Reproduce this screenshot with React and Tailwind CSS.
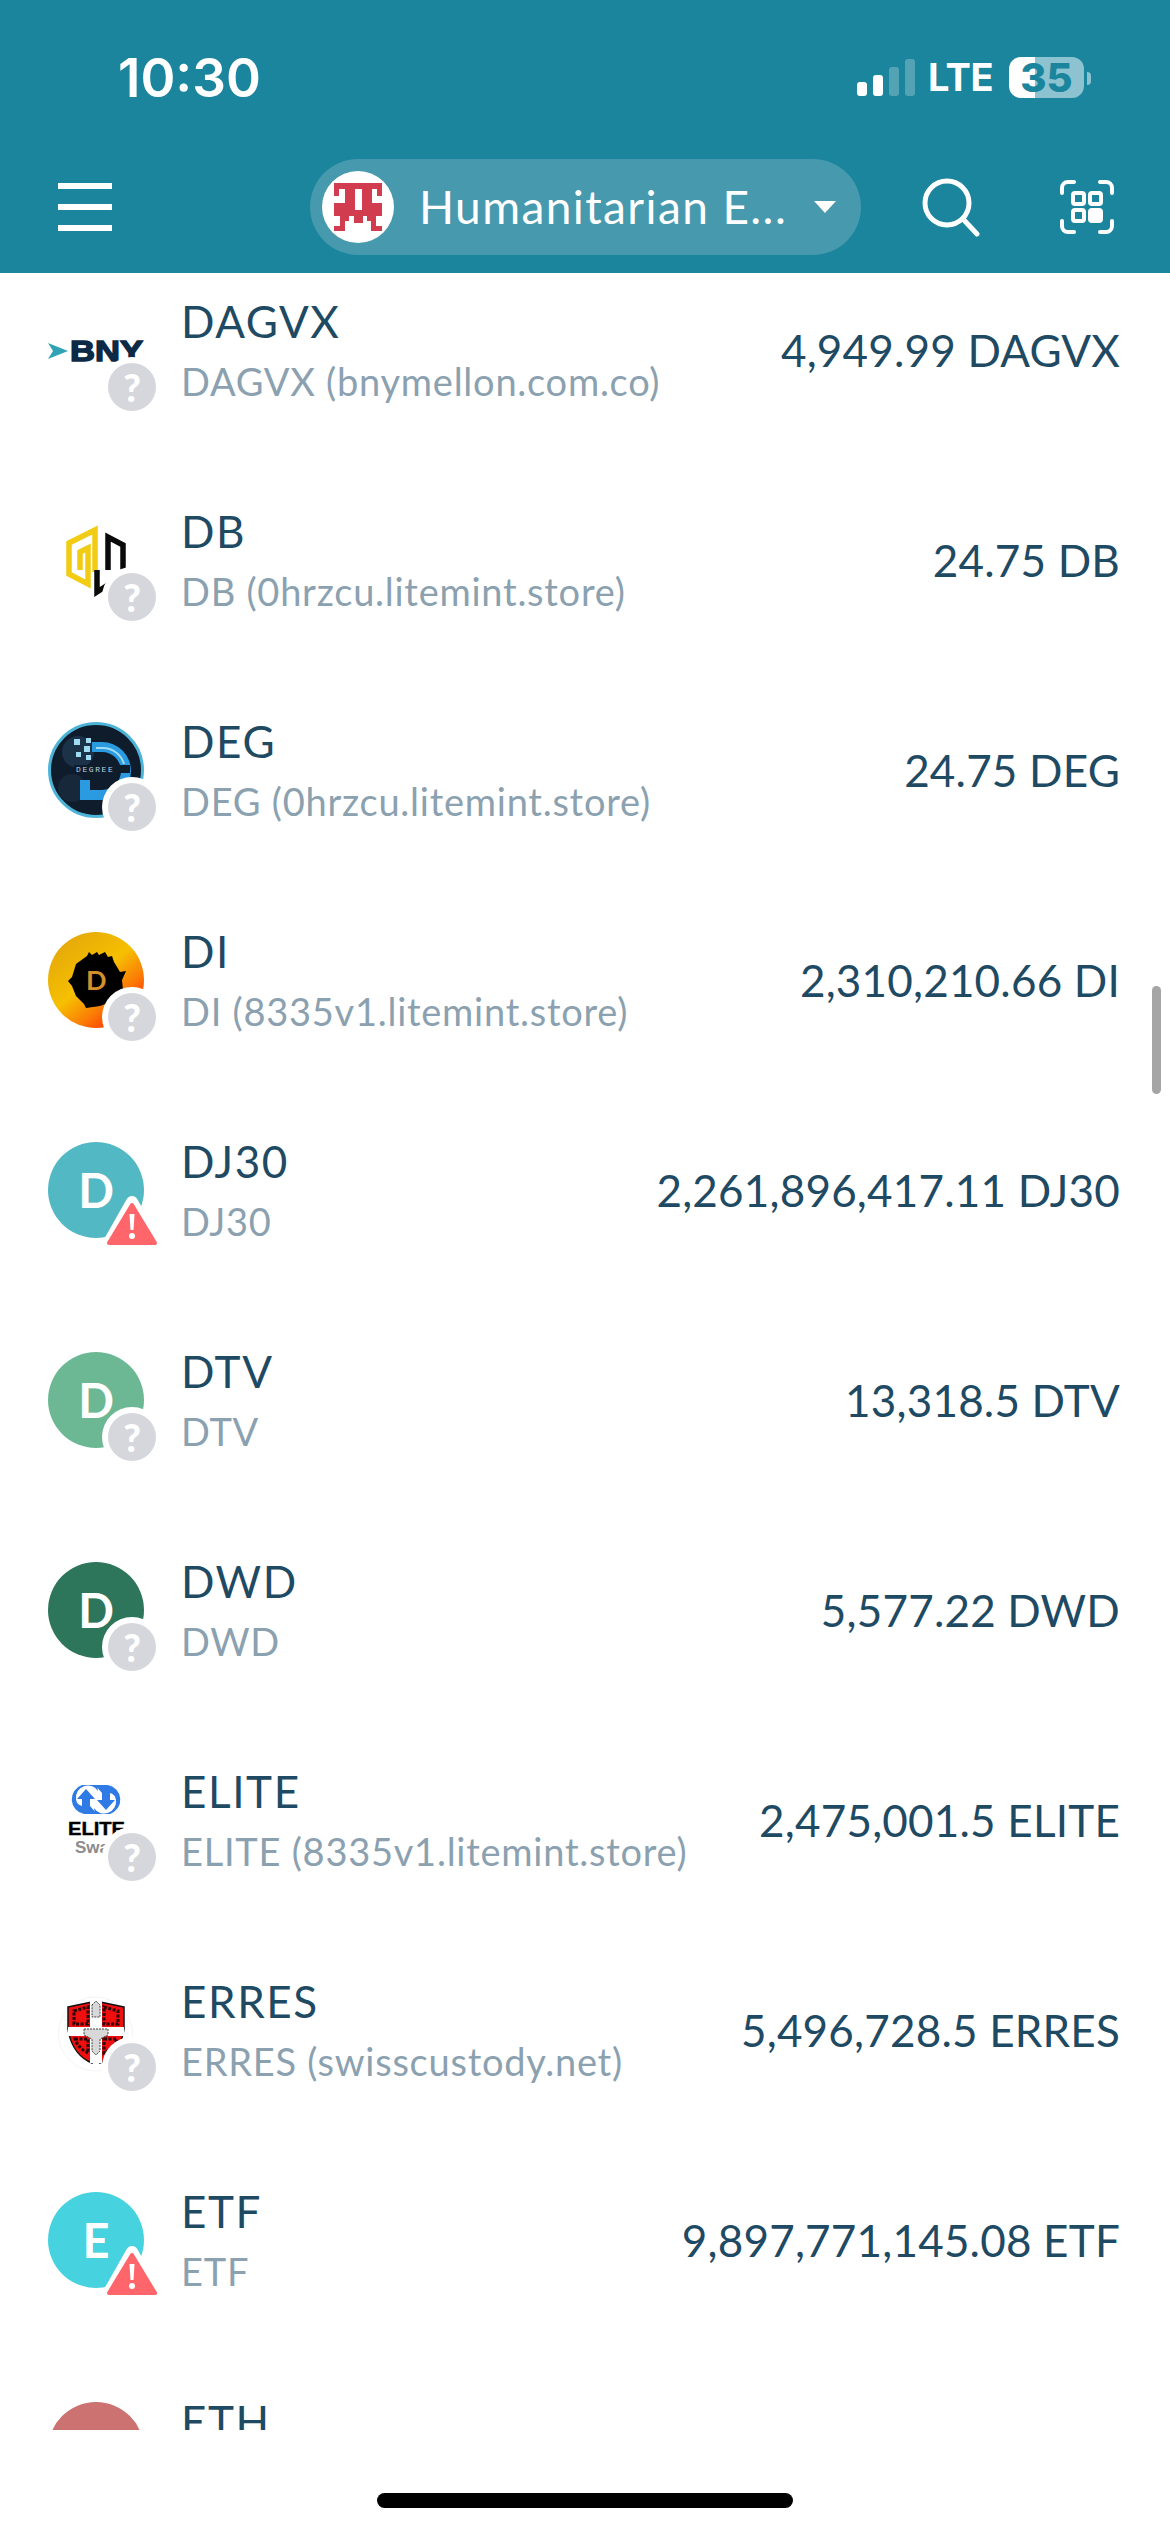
import React from 'react'

const font = { fontFamily: 'Lato, sans-serif' }

const rows = [
  { name: 'DAGVX', sub: 'DAGVX (bnymellon.com.co)', amount: '4,949.99 DAGVX', logo: 'bny' },
  { name: 'DB', sub: 'DB (0hrzcu.litemint.store)', amount: '24.75 DB', logo: 'db' },
  { name: 'DEG', sub: 'DEG (0hrzcu.litemint.store)', amount: '24.75 DEG', logo: 'deg' },
  { name: 'DI', sub: 'DI (8335v1.litemint.store)', amount: '2,310,210.66 DI', logo: 'di' },
  { name: 'DJ30', sub: 'DJ30', amount: '2,261,896,417.11 DJ30', letter: 'D', bg: 'bg-[#52b8c4]', warn: true },
  { name: 'DTV', sub: 'DTV', amount: '13,318.5 DTV', letter: 'D', bg: 'bg-[#6db894]' },
  { name: 'DWD', sub: 'DWD', amount: '5,577.22 DWD', letter: 'D', bg: 'bg-[#2d765b]' },
  { name: 'ELITE', sub: 'ELITE (8335v1.litemint.store)', amount: '2,475,001.5 ELITE', logo: 'elite' },
  { name: 'ERRES', sub: 'ERRES (swisscustody.net)', amount: '5,496,728.5 ERRES', logo: 'erres' },
  { name: 'ETF', sub: 'ETF', amount: '9,897,771,145.08 ETF', letter: 'E', bg: 'bg-[#47d2df]', warn: true },
  { name: 'ETH', sub: 'ETH', amount: '', letter: 'E', bg: 'bg-[#cc7372]' },
]

function Logo({ kind }) {
  if (kind === 'bny') {
    return (
      <svg viewBox="0 0 96 96" className="w-24 h-24 overflow-visible">
        <path d="M0 41 L20 49 L0 57 L5 49 Z" fill="#2fa3b5" />
        <text x="22" y="59" fontFamily="Liberation Sans" fontWeight="700" fontSize="29" textLength="73" lengthAdjust="spacingAndGlyphs" fill="#0c2a45" stroke="#0c2a45" strokeWidth="1.4">BNY</text>
      </svg>
    )
  }
  if (kind === 'db') {
    return (
      <svg viewBox="0 0 96 96" className="w-24 h-24 overflow-visible">
        <path d="M47 60 V18 L21 31 V62 L40 72 V36 L32 40 V58" fill="none" stroke="#f2cc12" strokeWidth="5.5" />
        <path d="M49 58 V80 L63 71 M60 58 V25 L75 33 V62" fill="none" stroke="#0a0a0a" strokeWidth="5.5" />
      </svg>
    )
  }
  if (kind === 'deg') {
    return (
      <svg viewBox="0 0 96 96" className="w-24 h-24 overflow-visible">
        <circle cx="48" cy="48" r="46.5" fill="#0f1c2b" stroke="#4db4d8" strokeWidth="3" />
        <circle cx="30" cy="30" r="16" fill="#1c3248" />
        <circle cx="24" cy="66" r="14" fill="#16283a" />
        <path d="M44 20 H54 A28 28 0 0 1 54 78 H32 V58 H42 V68 H54 A18 18 0 0 0 54 30 H44 Z" fill="#2a9be0" />
        <path d="M48 26 H54 A22 22 0 0 1 76 42" fill="none" stroke="#9fdcf2" strokeWidth="2" />
        <path d="M26 17 h6 v6 h-6 Z M36 24 h6 v6 h-6 Z M28 30 h5 v5 h-5 Z M38 16 h5 v5 h-5 Z M38 33 h5 v5 h-5 Z" fill="#9fdcf2" />
        <rect x="26" y="43" width="56" height="8" fill="#0f1c2b" />
        <text x="28" y="50" fontFamily="Liberation Mono" fontSize="8" letterSpacing="1.6" fill="#b9d6e4">DEGREE</text>
      </svg>
    )
  }
  if (kind === 'di') {
    return (
      <svg viewBox="0 0 96 96" className="w-24 h-24 overflow-visible">
        <defs>
          <linearGradient id="diGrad" x1="0.15" y1="0.1" x2="0.85" y2="0.95">
            <stop offset="0" stopColor="#e5a90a" />
            <stop offset="0.45" stopColor="#f6c000" />
            <stop offset="0.72" stopColor="#fb7a06" />
            <stop offset="1" stopColor="#fb1f00" />
          </linearGradient>
        </defs>
        <circle cx="48" cy="48" r="48" fill="url(#diGrad)" />
        <path d="M20 49 L24 45 L28 32 L39 24 L41 20 L44 23 L49 20 L51 23 L57 20 L60 25 L64 24 L66 30 L72 40 L78 39 L74 48 L75 58 L68 68 L52 74 L38 76 L36 72 L28 64 L24 54 Z" fill="#000" />
        <text x="38" y="58" fontFamily="Lato" fontWeight="700" fontSize="27" fill="#d6902a">D</text>
      </svg>
    )
  }
  if (kind === 'elite') {
    return (
      <svg viewBox="0 0 96 96" className="w-24 h-24 overflow-visible">
        <g transform="translate(0 8)">
          <path d="M34 5 A15 15 0 0 0 36 34 L49 34 L42 26 V19 H47 L38 9 L29 19 H34 V26 A8 8 0 0 1 28 19 A12 12 0 0 1 50 11 L49 5 Z" fill="#2f7ae5" />
          <path d="M62 34 A15 15 0 0 0 60 5 L47 5 L54 13 V20 H49 L58 30 L67 20 H62 V13 A8 8 0 0 1 68 20 A12 12 0 0 1 46 28 L47 34 Z" fill="#2f7ae5" />
        </g>
        <text x="20" y="63" fontFamily="Liberation Sans" fontWeight="700" fontSize="18" textLength="57" lengthAdjust="spacingAndGlyphs" fill="#000" stroke="#000" strokeWidth="0.4">ELITE</text>
        <text x="27" y="81" fontFamily="Liberation Sans" fontWeight="700" fontSize="17" fill="#8c8c8c">Swap</text>
      </svg>
    )
  }
  return (
    <svg viewBox="0 0 96 96" className="w-24 h-24 overflow-visible">
      <circle cx="47.5" cy="52" r="37" fill="#fff" stroke="#f4f4f4" strokeWidth="1" />
      <g transform="translate(0 11)">
        <path d="M20 14 L44 9 V70 C34 66 23 56 20 36 Z" fill="#f00f0f" stroke="#111" strokeWidth="1.5" />
        <path d="M76 14 L52 9 V70 C62 66 73 56 76 36 Z" fill="#f00f0f" stroke="#111" strokeWidth="1.5" />
        <rect x="20" y="34" width="56" height="9" fill="#fff" />
        <rect x="42" y="8" width="12" height="62" fill="#fff" />
        <path d="M26 18 L40 14 V31 H26 Z M56 14 L70 18 V31 H56 Z M27 46 H40 V60 C34 57 29 52 27 46 Z M56 46 H69 C67 52 62 57 56 60 Z" fill="none" stroke="#2a0505" strokeWidth="3" strokeDasharray="3 1.5" />
        <path d="M44 12 L48 8 L52 12 V24 H44 Z M36 36 H60 V42 L52 46 V58 L48 62 L44 58 V46 L36 42 Z" fill="#d8d8d8" stroke="#444" strokeWidth="1" strokeDasharray="2 1" />
      </g>
    </svg>
  )
}

function QuestionBadge() {
  return (
    <div className="absolute left-[54px] top-[55px] w-[60px] h-[60px] rounded-full bg-white flex items-center justify-center">
      <div className="w-12 h-12 rounded-full bg-[#d6d7dd] flex items-center justify-center text-white text-[38px] font-black leading-none" style={font}>?</div>
    </div>
  )
}

function WarnBadge() {
  return (
    <svg viewBox="0 0 60 54" className="absolute left-[54px] top-[54px] w-[60px] h-[54px]">
      <path d="M30 6 L55 50 H5 Z" fill="#ff666b" stroke="#fff" strokeWidth="12" strokeLinejoin="round" />
      <path d="M30 9 L53 47 H7 Z" fill="#ff666b" stroke="#ff666b" strokeWidth="4" strokeLinejoin="round" />
      <path d="M27.5 18 H32.5 L31.5 34 H28.5 Z" fill="#fff" />
      <circle cx="30" cy="40" r="3" fill="#fff" />
    </svg>
  )
}

function Row({ row }) {
  return (
    <div className="h-[210px] shrink-0 flex items-center pl-12 pr-[50px]">
      <div className="relative w-24 h-24 shrink-0">
        {row.logo ? <Logo kind={row.logo} /> : (
          <div className={`w-24 h-24 rounded-full flex items-center justify-center text-white text-[47px] font-bold ${row.bg}`}>{row.letter}</div>
        )}
        {row.warn ? <WarnBadge /> : <QuestionBadge />}
      </div>
      <div className="ml-[37px] flex flex-col">
        <div className="pt-px text-[44px] leading-[61px] tracking-[1.6px] text-[#1f4a63]">{row.name}</div>
        <div className="text-[38px] leading-[58px] tracking-[0.75px] text-[#8ba1b0]">{row.sub}</div>
      </div>
      <div className="ml-auto text-[44px] tracking-[0.2px] text-[#1f4a63]">{row.amount}</div>
    </div>
  )
}

function PillLogo() {
  return (
    <svg viewBox="0 0 48 48" className="w-12 h-12" fill="#d13d4f">
      <rect x="0" y="0" width="48" height="6" />
      <rect x="0" y="6" width="5" height="7" />
      <rect x="43" y="6" width="5" height="7" />
      <rect x="11" y="6" width="10" height="14" />
      <rect x="28" y="6" width="10" height="14" />
      <path d="M0 20 H21 V27 H28 V20 H48 V33 H42 V38 H33 V33 H29 V40 H20 V33 H15 V38 H6 V33 H0 Z" />
      <rect x="6" y="38" width="5" height="5" />
      <rect x="37" y="38" width="5" height="5" />
      <rect x="0" y="43" width="11" height="5" />
      <rect x="37" y="43" width="11" height="5" />
    </svg>
  )
}

export default function App() {
  return (
    <div className="relative w-[1170px] h-[2532px] bg-white overflow-hidden flex flex-col" style={font}>
      <div className="h-[273px] shrink-0 bg-[#1a859c] text-white flex flex-col">
        <div className="h-[159px] shrink-0 flex items-start pl-[118px] pt-[48px] pr-[79px] justify-between" style={{ fontFamily: 'Inter, sans-serif' }}>
          <div className="text-[53px] font-semibold leading-[60px]">10:30</div>
          <div className="flex items-end mt-[9px]">
            <div className="flex items-end gap-[6px] h-[37px] mb-[2px]">
              <div className="w-[10px] h-[14px] rounded-[3px] bg-white"></div>
              <div className="w-[10px] h-[21px] rounded-[3px] bg-white"></div>
              <div className="w-[10px] h-[29px] rounded-[3px] bg-white/25"></div>
              <div className="w-[10px] h-[37px] rounded-[3px] bg-white/25"></div>
            </div>
            <div className="ml-[13px] text-[38px] font-bold leading-[41px] tracking-[-0.5px]">LTE</div>
            <div className="ml-4 w-[75px] h-[41px] rounded-[12px] flex items-center justify-center bg-[linear-gradient(90deg,#ffffff_35%,#8dc2d0_35%)] text-[#1a859c] text-[40px] font-extrabold leading-[41px]">35</div>
            <div className="ml-[3px] mb-[13px] w-[4px] h-[13px] rounded-r-full bg-[#8dc2d0]"></div>
          </div>
        </div>
        <div className="flex items-center pl-[58px] pr-[56px] h-24">
          <div className="w-[54px] flex flex-col gap-[15px]">
            <div className="h-[6px] bg-white"></div>
            <div className="h-[6px] bg-white"></div>
            <div className="h-[6px] bg-white"></div>
          </div>
          <div className="ml-[198px] w-[551px] h-24 rounded-full bg-[#4799ae] flex items-center pl-3">
            <div className="w-[72px] h-[72px] rounded-full bg-white flex items-center justify-center shrink-0">
              <PillLogo />
            </div>
            <div className="ml-[25px] text-[46px] leading-none tracking-[1.4px] whitespace-nowrap">Humanitarian E...</div>
            <svg viewBox="0 0 22 12" className="ml-auto mr-[25px] w-[22px] h-3"><path d="M0 0 H22 L11 12 Z" fill="#fff" /></svg>
          </div>
          <svg viewBox="0 0 60 60" className="ml-[59px] w-[60px] h-[60px]" fill="none" stroke="#fff" strokeWidth="5">
            <circle cx="27" cy="26" r="22" />
            <path d="M43 42 L57 57" strokeLinecap="round" />
          </svg>
          <svg viewBox="0 0 54 54" className="ml-auto w-[54px] h-[54px]" fill="none" stroke="#fff">
            <path d="M2 13 V8 A6 6 0 0 1 8 2 H14 M40 2 H46 A6 6 0 0 1 52 8 V13 M52 41 V46 A6 6 0 0 1 46 52 H40 M14 52 H8 A6 6 0 0 1 2 46 V41" strokeWidth="4" strokeLinecap="round" />
            <rect x="13" y="13" width="11" height="11" rx="2" strokeWidth="4" />
            <rect x="30" y="13" width="11" height="11" rx="2" strokeWidth="4" />
            <rect x="13" y="30" width="11" height="11" rx="2" strokeWidth="4" />
            <rect x="30" y="30" width="11" height="11" rx="2" strokeWidth="4" fill="#fff" />
          </svg>
        </div>
      </div>
      <div className="h-[2157px] shrink-0 overflow-hidden flex flex-col">
        <div className="-mt-7 flex flex-col">
          {rows.map((row) => <Row key={row.name} row={row} />)}
        </div>
      </div>
      <div className="flex-1 flex justify-center pt-[63px]">
        <div className="w-[416px] h-[15px] rounded-full bg-black"></div>
      </div>
      <div className="absolute left-[1152px] top-[986px] w-[9px] h-[108px] rounded-full bg-[#a5a5a5]"></div>
    </div>
  )
}
